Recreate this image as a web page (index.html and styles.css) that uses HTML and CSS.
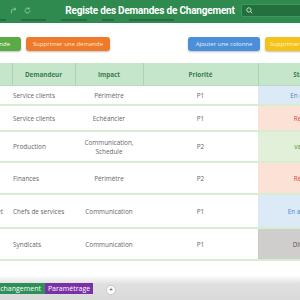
FILE: index.html
```html
<!DOCTYPE html>
<html lang="fr">
<head>
  <meta charset="UTF-8">
  <meta name="viewport" content="width=device-width, initial-scale=1.0">
  <title>Registe des Demandes de Changement</title>
  <link rel="stylesheet" href="styles.css">
</head>
<body>
  <div class="page">
    <header class="topbar">
      <div class="topbar-main">
        <div class="quick-icons">
          <svg width="7" height="7" viewBox="0 0 10 10"><path d="M2 9 V6 Q2 3 5 3 H8 M6 1 L8.5 3 L6 5" fill="none" stroke="#8fc7a0" stroke-width="1.4"/></svg>
          <svg width="7" height="7" viewBox="0 0 10 10"><path d="M8.5 5 A3.5 3.5 0 1 1 7 2.2 M7.5 0.5 V2.8 H5.2" fill="none" stroke="#8fc7a0" stroke-width="1.4"/></svg>
        </div>
        <h1 class="title">Registe des Demandes de Changement</h1>
        <div class="search">
          <svg width="7" height="7" viewBox="0 0 10 10"><circle cx="4.2" cy="4.2" r="3.1" fill="none" stroke="#cfe8d6" stroke-width="1.3"/><path d="M6.5 6.5 L9 9" stroke="#cfe8d6" stroke-width="1.3"/></svg>
        </div>
      </div>
      <div class="ribbon-lines">
        <span style="width: 6px"></span>
        <span style="width: 25px"></span>
        <span style="width: 26px"></span>
        <span style="width: 12px"></span>
        <span style="width: 45px"></span>
      </div>
    </header>

    <div class="toolbar">
      <button class="btn btn-green">Ajouter une demande</button>
      <button class="btn btn-orange">Supprimer une demande</button>
      <div class="spacer"></div>
      <button class="btn btn-blue">Ajouter une colonne</button>
      <button class="btn btn-yellow">Supprimer une colonne</button>
    </div>

    <div class="table-wrap">
      <table class="grid">
        <colgroup>
          <col class="col-title">
          <col class="col-who">
          <col class="col-impact">
          <col class="col-prio">
          <col class="col-status">
        </colgroup>
        <thead>
          <tr>
            <th>Titre</th>
            <th>Demandeur</th>
            <th>Impact</th>
            <th>Priorité</th>
            <th>Statut</th>
          </tr>
        </thead>
        <tbody>
          <tr class="r1">
            <td class="c-title"></td>
            <td class="c-who">Service clients</td>
            <td>Périmètre</td>
            <td>P1</td>
            <td class="st st-blue">En cours</td>
          </tr>
          <tr class="r2">
            <td class="c-title"></td>
            <td class="c-who">Service clients</td>
            <td>Echéancier</td>
            <td>P1</td>
            <td class="st st-red">Rejeté</td>
          </tr>
          <tr class="r3">
            <td class="c-title"></td>
            <td class="c-who">Production</td>
            <td>Communication,<br>Schedule</td>
            <td>P2</td>
            <td class="st st-green">validé</td>
          </tr>
          <tr class="r4">
            <td class="c-title"></td>
            <td class="c-who">Finances</td>
            <td>Périmètre</td>
            <td>P2</td>
            <td class="st st-red">Rejeté</td>
          </tr>
          <tr class="r5">
            <td class="c-title">Plan projet</td>
            <td class="c-who">Chefs de services</td>
            <td>Communication</td>
            <td>P1</td>
            <td class="st st-blue">En attente</td>
          </tr>
          <tr class="r6">
            <td class="c-title"></td>
            <td class="c-who">Syndicats</td>
            <td>Communication</td>
            <td>P1</td>
            <td class="st st-grey">Différé</td>
          </tr>
        </tbody>
      </table>
    </div>

    <footer class="tabbar">
      <div class="tab tab-green">Demandes de changement</div>
      <div class="tab tab-purple">Paramétrage</div>
      <div class="tab-add">+</div>
    </footer>
  </div>
</body>
</html>
```

FILE: styles.css
```css
body {
  margin: 0;
  font-family: "Open Sans", Arial, sans-serif;
  background-color: #fff;
}

.page {
  width: 300px;
  height: 300px;
  overflow: hidden;
  display: flex;
  flex-direction: column;
}

/* top bar */
.topbar {
  height: 23px;
  background-color: #2f8a4f;
  display: flex;
  flex-direction: column;
  flex-shrink: 0;
}

.topbar-main {
  height: 19px;
  display: grid;
  grid-template-columns: minmax(0, 1fr) auto minmax(0, 1fr);
  align-items: center;
}

.quick-icons {
  display: flex;
  gap: 7px;
  padding-left: 10px;
  padding-top: 1px;
}

.title {
  margin: 0;
  font-family: Roboto, Arial, sans-serif;
  font-size: 10px;
  letter-spacing: -0.2px;
  font-weight: bold;
  color: #fff;
  white-space: nowrap;
  padding-top: 1px;
}

.search {
  justify-self: start;
  margin-left: 6px;
  width: 70px;
  height: 11px;
  background-color: #236f3e;
  border: 1px solid #3d9a5c;
  border-radius: 2px;
  display: flex;
  align-items: center;
  padding-left: 4px;
  margin-top: 1px;
}

.ribbon-lines {
  display: flex;
  gap: 15px;
  height: 2px;
}

.ribbon-lines span {
  display: block;
  height: 2px;
  background-color: #226b3b;
  opacity: 0.85;
}

/* buttons */
.toolbar {
  display: flex;
  align-items: center;
  margin-top: 13px;
  margin-left: -62px;
  height: 15px;
  flex-shrink: 0;
}

.spacer {
  flex: 1;
}

.btn {
  height: 14px;
  border: none;
  border-radius: 3px;
  font-family: "Open Sans", Arial, sans-serif;
  font-size: 6px;
  color: #fff;
  padding: 0;
  white-space: nowrap;
  overflow: hidden;
  box-shadow: 0 1px 2px rgba(0, 0, 0, 0.25);
  flex-shrink: 0;
}

.btn-green {
  width: 83px;
  background-color: #5aab46;
}

.btn-orange {
  width: 84px;
  margin-left: 5px;
  background-color: #f07a2c;
  color: #ffeccc;
}

.btn-blue {
  width: 72px;
  background-color: #4a8fd8;
  color: #e6f0fb;
}

.btn-yellow {
  width: 76px;
  margin-left: 5px;
  margin-right: -41px;
  background-color: #f5c21b;
  color: #fff6d8;
}

/* table */
.table-wrap {
  flex: 1;
  overflow: hidden;
  margin-top: 12px;
}

.grid {
  border-collapse: collapse;
  table-layout: fixed;
  width: 396px;
  margin-left: -48px;
  font-size: 6.4px;
  color: #666;
}

.col-title { width: 60px; }
.col-who { width: 63px; }
.col-impact { width: 68px; }
.col-prio { width: 115px; }
.col-status { width: 90px; }

.grid th {
  height: 22px;
  padding: 0;
  background-color: #c5e6cb;
  border-right: 1px solid #a9d5b1;
  border-bottom: 1px solid #b7dcbd;
  color: #3c7c4c;
  font-weight: bold;
  font-size: 6.3px;
  text-align: center;
}

.grid td {
  padding: 0;
  text-align: center;
  border-bottom: 2px solid #d8ecd0;
  line-height: 9px;
}

.grid td.c-who {
  text-align: left;
  padding-left: 1px;
}

.grid td.c-title {
  text-align: right;
  padding-right: 9px;
  white-space: nowrap;
}

.r1 td { height: 18px; }
.r2 td { height: 24px; }
.r3 td { height: 29px; }
.r4 td { height: 30px; }
.r5 td { height: 32px; }
.r6 td { height: 30px; }

.st-blue {
  background-color: #dce9f7;
  color: #4a86c8;
}

.st-red {
  background-color: #fbe1d6;
  color: #d9453a;
}

.st-green {
  background-color: #e2f0da;
  color: #4c8f3a;
}

.st-grey {
  background-color: #d0cdcd;
  color: #555;
}

/* sheet tabs */
.tabbar {
  height: 30px;
  flex-shrink: 0;
  background: linear-gradient(#fff 0, #fff 5px, #e0e0e0 14px, #d9d9d9 100%);
  display: flex;
  align-items: flex-start;
  padding-top: 13px;
  box-sizing: border-box;
}

.tab {
  height: 11px;
  font-size: 7px;
  line-height: 11px;
  color: #fff;
  white-space: nowrap;
}

.tab-green {
  width: 106px;
  margin-left: -61px;
  background-color: #2f8f58;
  text-align: right;
  padding-right: 4px;
  box-sizing: border-box;
}

.tab-purple {
  width: 48px;
  background-color: #7b31a6;
  text-align: center;
}

.tab-add {
  width: 8px;
  height: 8px;
  margin-left: 13px;
  margin-top: 2px;
  border-radius: 50%;
  background-color: #fff;
  border: 1px solid #c8c8c8;
  font-size: 7px;
  line-height: 8px;
  text-align: center;
  color: #333;
}
```
